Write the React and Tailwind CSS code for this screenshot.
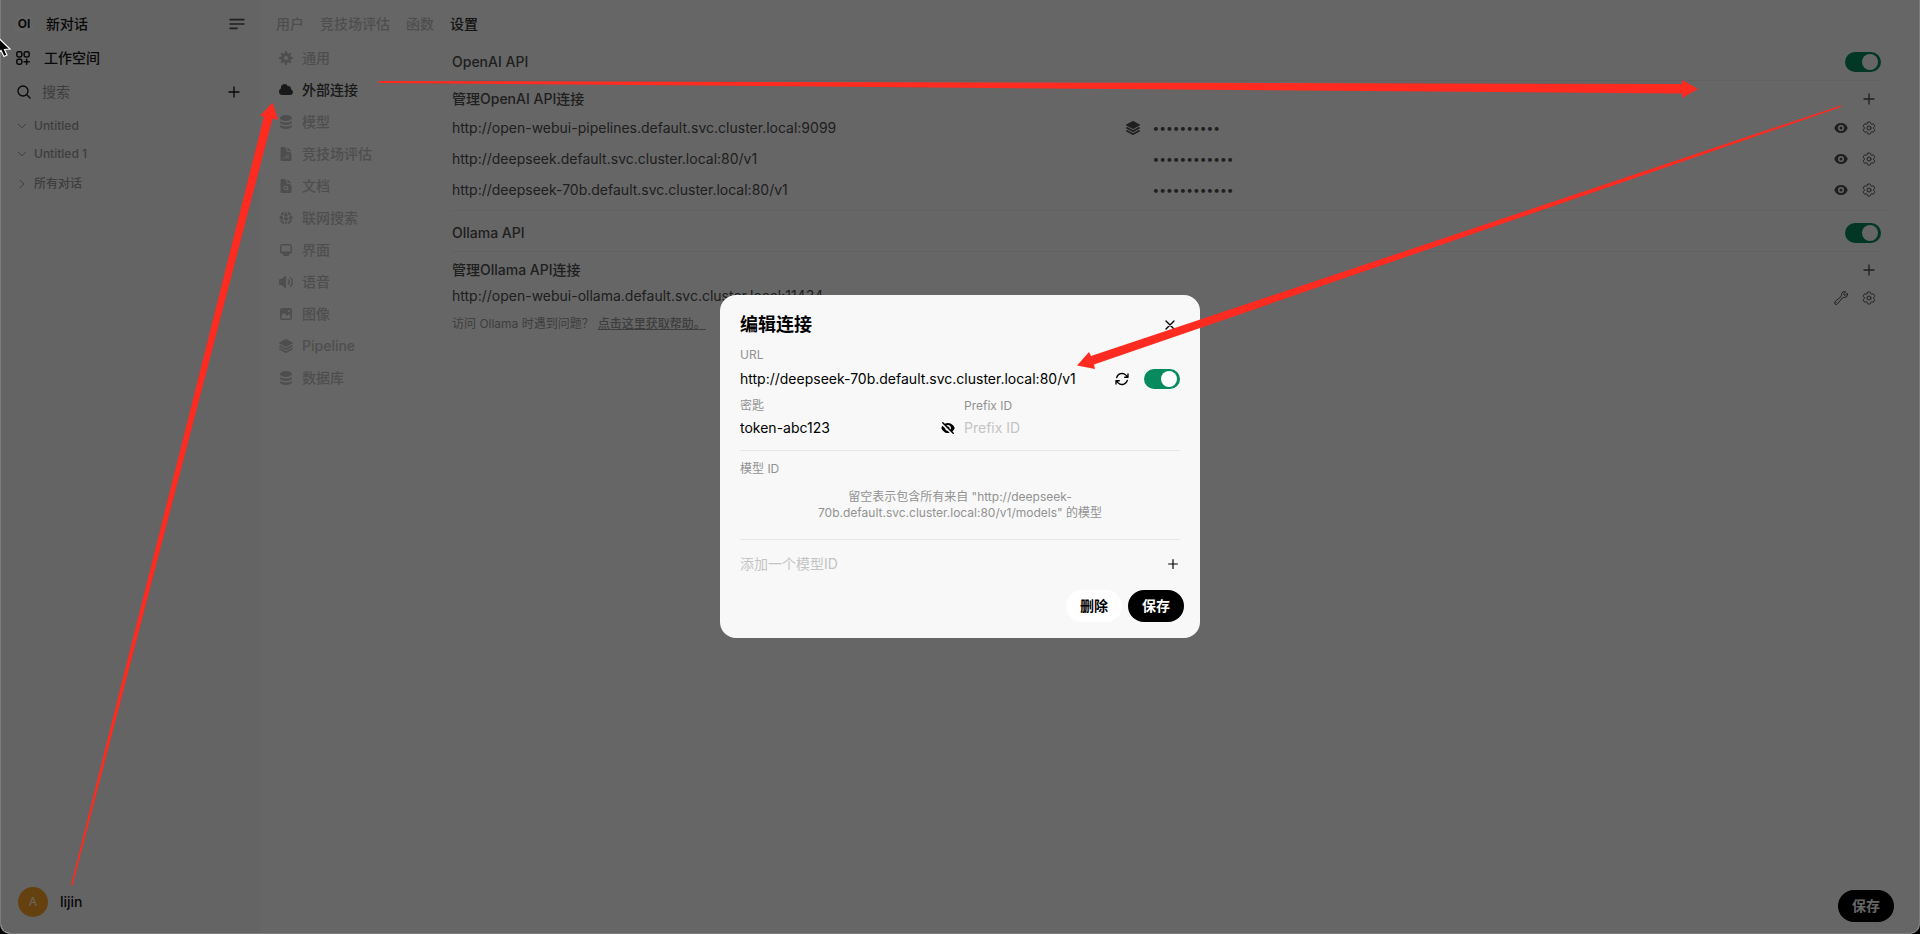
import { useState } from 'react';
import clsx from 'clsx';
import {
  HiDocumentChartBar,
  HiDocumentMagnifyingGlass,
  HiGlobeAlt,
  HiOutlineArrowPath,
  HiOutlineBars3BottomLeft,
  HiOutlineChevronDown,
  HiOutlineChevronRight,
  HiOutlineCog6Tooth,
  HiOutlineMagnifyingGlass,
  HiOutlinePlus,
  HiOutlineSquaresPlus,
  HiOutlineWrench,
  HiOutlineXMark,
  HiSquare3Stack3D,
} from 'react-icons/hi2';

// 16px solid icons, all filled with the current text colour
function MicroIcon({ paths }) {
  return (
    <svg viewBox="0 0 16 16" fill="currentColor" className="size-4" aria-hidden="true">
      {paths.map((d) => (
        <path key={d} d={d} fillRule="evenodd" clipRule="evenodd" />
      ))}
    </svg>
  );
}

const COG = [
  'M6.955 1.45A.5.5 0 0 1 7.452 1h1.096a.5.5 0 0 1 .497.45l.17 1.699c.484.12.94.312 1.356.562l1.321-1.081a.5.5 0 0 1 .67.033l.774.775a.5.5 0 0 1 .034.67l-1.08 1.32c.25.417.44.873.561 1.357l1.699.17a.5.5 0 0 1 .45.497v1.096a.5.5 0 0 1-.45.497l-1.699.17c-.12.484-.312.94-.562 1.356l1.082 1.322a.5.5 0 0 1-.034.67l-.774.774a.5.5 0 0 1-.67.033l-1.322-1.08c-.416.25-.872.44-1.356.561l-.17 1.699a.5.5 0 0 1-.497.45H7.452a.5.5 0 0 1-.497-.45l-.17-1.699a4.973 4.973 0 0 1-1.356-.562L4.108 13.37a.5.5 0 0 1-.67-.033l-.774-.775a.5.5 0 0 1-.034-.67l1.08-1.32a4.971 4.971 0 0 1-.561-1.357l-1.699-.17A.5.5 0 0 1 1 8.548V7.452a.5.5 0 0 1 .45-.497l1.699-.17c.12-.484.312-.94.562-1.356L2.629 4.107a.5.5 0 0 1 .034-.67l.774-.774a.5.5 0 0 1 .67-.033L5.43 3.71a4.97 4.97 0 0 1 1.356-.561l.17-1.699ZM6 8c0 .538.212 1.026.558 1.385l.057.057a2 2 0 0 0 2.828-2.828l-.058-.056A2 2 0 0 0 6 8Z',
];

const CLOUD = [
  'M1 9.5A3.5 3.5 0 0 0 4.5 13H12a3 3 0 0 0 .917-5.857 2.503 2.503 0 0 0-3.198-3.019 3.5 3.5 0 0 0-6.628 2.171A3.5 3.5 0 0 0 1 9.5Z',
];

const STACK = [
  'M8 7c3.314 0 6-1.343 6-3s-2.686-3-6-3-6 1.343-6 3 2.686 3 6 3Z',
  'M8 8.5c1.84 0 3.579-.37 4.914-1.037A6.33 6.33 0 0 0 14 6.78V8c0 1.657-2.686 3-6 3S2 9.657 2 8V6.78c.346.273.72.5 1.087.683C4.42 8.131 6.16 8.5 8 8.5Z',
  'M8 12.5c1.84 0 3.579-.37 4.914-1.037.366-.183.74-.41 1.086-.684V12c0 1.657-2.686 3-6 3s-6-1.343-6-3v-1.22c.346.273.72.5 1.087.683C4.42 12.131 6.16 12.5 8 12.5Z',
];

const DESKTOP = [
  'M2 4.25A2.25 2.25 0 0 1 4.25 2h7.5A2.25 2.25 0 0 1 14 4.25v5.5A2.25 2.25 0 0 1 11.75 12h-1.312c.1.128.21.248.328.36a.75.75 0 0 1 .234.545v.345a.75.75 0 0 1-.75.75h-4.5a.75.75 0 0 1-.75-.75v-.345a.75.75 0 0 1 .234-.545c.118-.111.228-.232.328-.36H4.25A2.25 2.25 0 0 1 2 9.75v-5.5Zm2.25-.75a.75.75 0 0 0-.75.75v4.5c0 .414.336.75.75.75h7.5a.75.75 0 0 0 .75-.75v-4.5a.75.75 0 0 0-.75-.75h-7.5Z',
];

const SPEAKER = [
  'M7.557 2.066A.75.75 0 0 1 8 2.75v10.5a.75.75 0 0 1-1.248.56L3.59 11H2a1 1 0 0 1-1-1V6a1 1 0 0 1 1-1h1.59l3.162-2.81a.75.75 0 0 1 .805-.124ZM12.95 3.05a.75.75 0 1 0-1.06 1.06 5.5 5.5 0 0 1 0 7.78.75.75 0 1 0 1.06 1.06 7 7 0 0 0 0-9.9Z',
  'M10.828 5.172a.75.75 0 1 0-1.06 1.06 2.5 2.5 0 0 1 0 3.536.75.75 0 1 0 1.06 1.06 4 4 0 0 0 0-5.656Z',
];

const PHOTO = [
  'M2 4a2 2 0 0 1 2-2h8a2 2 0 0 1 2 2v8a2 2 0 0 1-2 2H4a2 2 0 0 1-2-2V4Zm10.5 5.707a.5.5 0 0 0-.146-.353l-1-1a.5.5 0 0 0-.708 0L9.354 9.646a.5.5 0 0 1-.708 0L6.354 7.354a.5.5 0 0 0-.708 0l-2 2a.5.5 0 0 0-.146.353V12a.5.5 0 0 0 .5.5h8a.5.5 0 0 0 .5-.5V9.707ZM12 5a1 1 0 1 1-2 0 1 1 0 0 1 2 0Z',
];

const EYE = [
  'M8 9.5a1.5 1.5 0 1 0 0-3 1.5 1.5 0 0 0 0 3Z',
  'M1.38 8.28a.87.87 0 0 1 0-.566 7.003 7.003 0 0 1 13.238.006.87.87 0 0 1 0 .566A7.003 7.003 0 0 1 1.379 8.28ZM11 8a3 3 0 1 1-6 0 3 3 0 0 1 6 0Z',
];

const EYE_SLASH = [
  'M3.28 2.22a.75.75 0 0 0-1.06 1.06l10.5 10.5a.75.75 0 1 0 1.06-1.06l-1.322-1.323a7.012 7.012 0 0 0 2.16-3.11.87.87 0 0 0 0-.567A7.003 7.003 0 0 0 4.82 3.76l-1.54-1.54Zm3.196 3.195 1.135 1.136A1.502 1.502 0 0 1 9.45 8.389l1.136 1.135a3 3 0 0 0-4.109-4.109Z',
  'm7.812 10.994 1.816 1.816A7.003 7.003 0 0 1 1.38 8.28a.87.87 0 0 1 0-.566 6.985 6.985 0 0 1 1.113-2.039l2.513 2.513a3 3 0 0 0 2.806 2.806Z',
];

const TABS = ['用户', '竞技场评估', '函数', '设置'];

const SETTINGS = [
  { name: '通用', icon: <MicroIcon paths={COG} /> },
  { name: '外部连接', icon: <MicroIcon paths={CLOUD} /> },
  { name: '模型', icon: <MicroIcon paths={STACK} /> },
  { name: '竞技场评估', icon: <HiDocumentChartBar className="size-4" /> },
  { name: '文档', icon: <HiDocumentMagnifyingGlass className="size-4" /> },
  { name: '联网搜索', icon: <HiGlobeAlt className="size-4" /> },
  { name: '界面', icon: <MicroIcon paths={DESKTOP} /> },
  { name: '语音', icon: <MicroIcon paths={SPEAKER} /> },
  { name: '图像', icon: <MicroIcon paths={PHOTO} /> },
  { name: 'Pipeline', icon: <HiSquare3Stack3D className="size-4" /> },
  { name: '数据库', icon: <MicroIcon paths={STACK} /> },
];

const CONNECTIONS = [
  { url: 'http://open-webui-pipelines.default.svc.cluster.local:9099', key: '0p3n-w3bu!', pipeline: true },
  { url: 'http://deepseek.default.svc.cluster.local:80/v1', key: 'token-abc123' },
  { url: 'http://deepseek-70b.default.svc.cluster.local:80/v1', key: 'token-abc123' },
];

function Switch({ label, checked, onChange }) {
  return (
    <input
      type="checkbox"
      role="switch"
      aria-label={label}
      checked={checked}
      onChange={(event) => onChange(event.target.checked)}
      className="flex h-5 w-9 shrink-0 cursor-pointer appearance-none items-center rounded-full bg-gray-300 px-[3px] before:size-4 before:rounded-full before:bg-white checked:justify-end checked:bg-[#068a5e]"
    />
  );
}

function IconButton({ label, children }) {
  return (
    <button type="button" aria-label={label} className="flex size-6 shrink-0 items-center justify-center">
      {children}
    </button>
  );
}

function Sidebar() {
  return (
    <aside className="flex w-[259px] shrink-0 flex-col bg-[#f9f9f9] pt-[7px] text-sm font-medium text-[#171717]">
      <div className="flex h-[34px] items-center px-[13px]">
        <a href="#new" className="flex flex-1 items-center gap-3">
          <span className="flex size-5 items-center justify-center rounded-full bg-white text-xs font-bold">OI</span>
          新对话
        </a>
        <button type="button" aria-label="菜单" className="text-[#4e4e4e]">
          <HiOutlineBars3BottomLeft className="size-5" strokeWidth={2} />
        </button>
      </div>

      <a href="#workspace" className="flex h-[34px] items-center gap-3 pl-[13px]">
        <HiOutlineSquaresPlus className="size-[18px]" strokeWidth={2} />
        工作空间
      </a>

      <div className="flex h-[34px] items-center gap-2.5 pr-[18px] pl-[15px]">
        <HiOutlineMagnifyingGlass className="size-4" strokeWidth={2} />
        <input
          aria-label="搜索"
          placeholder="搜索"
          className="w-0 flex-1 bg-transparent font-normal outline-none placeholder:text-[#9b9b9b]"
        />
        <button type="button" aria-label="新建分组">
          <HiOutlinePlus className="size-4" strokeWidth={2} />
        </button>
      </div>

      <div className="pt-[3px] pl-[15px] text-xs text-[#9b9b9b]">
        <button type="button" className="flex h-7 w-full items-center gap-1.5">
          <HiOutlineChevronDown className="size-3" strokeWidth={2} />
          Untitled
        </button>
        <button type="button" className="flex h-7 w-full items-center gap-1.5">
          <HiOutlineChevronDown className="size-3" strokeWidth={2} />
          Untitled 1
        </button>
        <button type="button" className="mt-0.5 flex h-7 w-full items-center gap-1.5">
          <HiOutlineChevronRight className="size-3" strokeWidth={2} />
          所有对话
        </button>
      </div>

      <button type="button" className="mt-auto flex items-center gap-3 pb-4 pl-[17px]">
        <span className="flex size-[30px] items-center justify-center rounded-full bg-[#ffa228] text-xs font-normal text-white">
          A
        </span>
        lijin
      </button>
    </aside>
  );
}

function SettingsNav() {
  return (
    <nav className="w-44 shrink-0">
      {SETTINGS.map(({ name, icon }) => (
        <button
          key={name}
          type="button"
          className={clsx(
            'flex h-8 w-full items-center gap-2 px-0.5 text-sm font-medium',
            name === '外部连接' ? 'text-[#404040]' : 'text-[#c4c4c4]',
          )}
        >
          {icon}
          {name}
        </button>
      ))}
    </nav>
  );
}

function Connections() {
  const [openai, setOpenai] = useState(true);
  const [ollama, setOllama] = useState(true);

  return (
    <section className="min-w-0 flex-1 pt-2.5 pr-8 text-sm text-[#4e4e4e]">
      <div className="pr-1.5">
        <div className="flex h-5 items-center justify-between">
          <h2 className="font-medium">OpenAI API</h2>
          <Switch label="OpenAI API" checked={openai} onChange={setOpenai} />
        </div>
        <hr className="mt-2 border-[#f2f2f2]" />
        <div className="mt-2 flex h-5 items-center justify-between">
          <h3 className="font-medium">管理OpenAI API连接</h3>
          <IconButton label="添加 OpenAI 连接">
            <HiOutlinePlus className="size-4" strokeWidth={2} />
          </IconButton>
        </div>
        <div className="mt-[7px] grid gap-[7px]">
          {CONNECTIONS.map((item) => (
            <div key={item.url} className="flex h-6 items-center gap-2">
              <div className="flex flex-1 items-center gap-1">
                <div className="flex flex-1 items-center">
                  <input
                    aria-label="API URL"
                    defaultValue={item.url}
                    className="w-0 flex-1 bg-transparent outline-none"
                  />
                  {item.pipeline && <HiSquare3Stack3D className="mr-2 size-4" />}
                </div>
                <div className="flex flex-1 items-center">
                  <input
                    type="password"
                    aria-label="API 密钥"
                    defaultValue={item.key}
                    className="w-0 flex-1 bg-transparent text-xs outline-none"
                  />
                  <button type="button" aria-label="显示密钥">
                    <MicroIcon paths={EYE} />
                  </button>
                </div>
              </div>
              <IconButton label="配置">
                <HiOutlineCog6Tooth className="size-4" />
              </IconButton>
            </div>
          ))}
        </div>
      </div>

      <hr className="mt-2 border-[#f2f2f2]" />

      <div className="mt-3 pr-1.5">
        <div className="flex h-5 items-center justify-between">
          <h2 className="font-medium">Ollama API</h2>
          <Switch label="Ollama API" checked={ollama} onChange={setOllama} />
        </div>
        <hr className="mt-2 border-[#f2f2f2]" />
        <div className="mt-2 flex h-5 items-center justify-between">
          <h3 className="font-medium">管理Ollama API连接</h3>
          <IconButton label="添加 Ollama 连接">
            <HiOutlinePlus className="size-4" strokeWidth={2} />
          </IconButton>
        </div>
        <div className="mt-1.5 flex h-6 items-start gap-1">
          <input
            aria-label="Ollama URL"
            defaultValue="http://open-webui-ollama.default.svc.cluster.local:11434"
            className="h-5 flex-1 bg-transparent outline-none"
          />
          <IconButton label="管理">
            <HiOutlineWrench className="size-4" />
          </IconButton>
          <IconButton label="配置">
            <HiOutlineCog6Tooth className="size-4" />
          </IconButton>
        </div>
        <p className="mt-1.5 flex gap-1 text-xs text-[#9b9b9b]">
          访问 Ollama 时遇到问题？
          <a href="#help" className="font-medium underline">点击这里获取帮助。</a>
        </p>
      </div>
    </section>
  );
}

function EditConnection() {
  const [enabled, setEnabled] = useState(true);

  return (
    <form
      role="dialog"
      aria-labelledby="dialog-title"
      onSubmit={(event) => event.preventDefault()}
      className="w-[480px] rounded-2xl bg-[#f8f8f8] px-5 py-4 text-sm text-black"
    >
      <div className="flex h-7 items-center justify-between">
        <h1 id="dialog-title" className="text-lg font-semibold">编辑连接</h1>
        <button type="button" aria-label="关闭" className="pr-0.5">
          <HiOutlineXMark className="size-4" strokeWidth={2} />
        </button>
      </div>

      <label htmlFor="url" className="mt-2 block text-xs text-[#929292]">URL</label>
      <div className="mt-1 flex h-6 items-center">
        <input
          id="url"
          defaultValue="http://deepseek-70b.default.svc.cluster.local:80/v1"
          className="h-5 w-0 flex-1 bg-transparent outline-none"
        />
        <button type="button" aria-label="验证连接" className="mr-3.5">
          <HiOutlineArrowPath className="size-4" strokeWidth={2} />
        </button>
        <Switch label="启用" checked={enabled} onChange={setEnabled} />
      </div>

      <div className="mt-[7px] grid grid-cols-2 gap-2">
        <div>
          <label htmlFor="key" className="block text-xs text-[#929292]">密匙</label>
          <div className="mt-1 flex h-5 items-center">
            <input id="key" defaultValue="token-abc123" className="w-0 flex-1 bg-transparent outline-none" />
            <button type="button" aria-label="隐藏密钥">
              <MicroIcon paths={EYE_SLASH} />
            </button>
          </div>
        </div>
        <div>
          <label htmlFor="prefix" className="block text-xs text-[#929292]">Prefix ID</label>
          <input
            id="prefix"
            placeholder="Prefix ID"
            className="mt-1 block h-5 w-full bg-transparent outline-none placeholder:text-[#c4c4c4]"
          />
        </div>
      </div>

      <hr className="mt-3 border-[#e6e6e6]" />
      <label htmlFor="model" className="mt-2.5 block text-xs text-[#929292]">模型 ID</label>
      <p className="mt-3 px-12 text-center text-xs text-[#929292]">
        留空表示包含所有来自 "http://deepseek-70b.default.svc.cluster.local:80/v1/models" 的模型
      </p>
      <hr className="mt-[18px] border-[#e6e6e6]" />

      <div className="mt-3.5 flex h-5 items-center">
        <input
          id="model"
          placeholder="添加一个模型ID"
          className="w-0 flex-1 bg-transparent outline-none placeholder:text-[#c4c4c4]"
        />
        <button type="button" aria-label="添加">
          <HiOutlinePlus className="size-3.5" strokeWidth={2} />
        </button>
      </div>

      <div className="-mr-1 mt-4 flex justify-end gap-1.5 font-semibold">
        <button type="button" className="h-8 rounded-full bg-white px-3.5">删除</button>
        <button type="submit" className="h-8 rounded-full bg-black px-3.5 text-white">保存</button>
      </div>
    </form>
  );
}

function Annotations() {
  return (
    <svg
      viewBox="0 0 1920 934"
      preserveAspectRatio="none"
      className="pointer-events-none absolute inset-0 size-full"
      aria-hidden="true"
    >
      <g fill="#ff2a20">
        <path d="M71 885 264 116.500 260 116 272.500 102.500 278 120 272.500 118.500 72.500 885.500Z" />
        <path d="M379 81 1682 84V80L1698 89 1682 98V93.500L379 83Z" />
        <path d="M1841 105.500 1091 356 1089 352 1077 365.500 1095 369 1094 364.500 1841 107Z" />
      </g>
      <path
        d="M-3 36.500V54L1 50.500 4 56.500 7 55 4.500 49.500 10 49Z"
        fill="#000"
        stroke="#fff"
        strokeWidth="1.200"
      />
    </svg>
  );
}

export default function App() {
  return (
    <div className="relative min-h-screen bg-black font-['Inter','Noto_Sans_CJK_SC',sans-serif]">
      <div className="relative flex min-h-screen overflow-hidden rounded-b-[10px] border-x border-b border-[#7c7c7c] bg-white">
        <Sidebar />
        <main className="flex min-w-0 flex-1 flex-col pt-[14px] pl-4">
          <nav className="flex h-5 items-center gap-4 text-sm font-medium">
            {TABS.map((tab) => (
              <a key={tab} href="#tab" className={tab === '设置' ? 'text-[#333333]' : 'text-[#c4c4c4]'}>
                {tab}
              </a>
            ))}
          </nav>
          <div className="mt-2 flex">
            <SettingsNav />
            <Connections />
          </div>
          <div className="mt-auto flex justify-end pr-[25px] pb-[11px] text-sm font-semibold">
            <button type="button" className="h-8 rounded-full bg-black px-3.5 text-white">保存</button>
          </div>
        </main>
        <div className="absolute inset-0 flex items-center justify-center bg-black/60">
          <EditConnection />
        </div>
      </div>
      <Annotations />
    </div>
  );
}
